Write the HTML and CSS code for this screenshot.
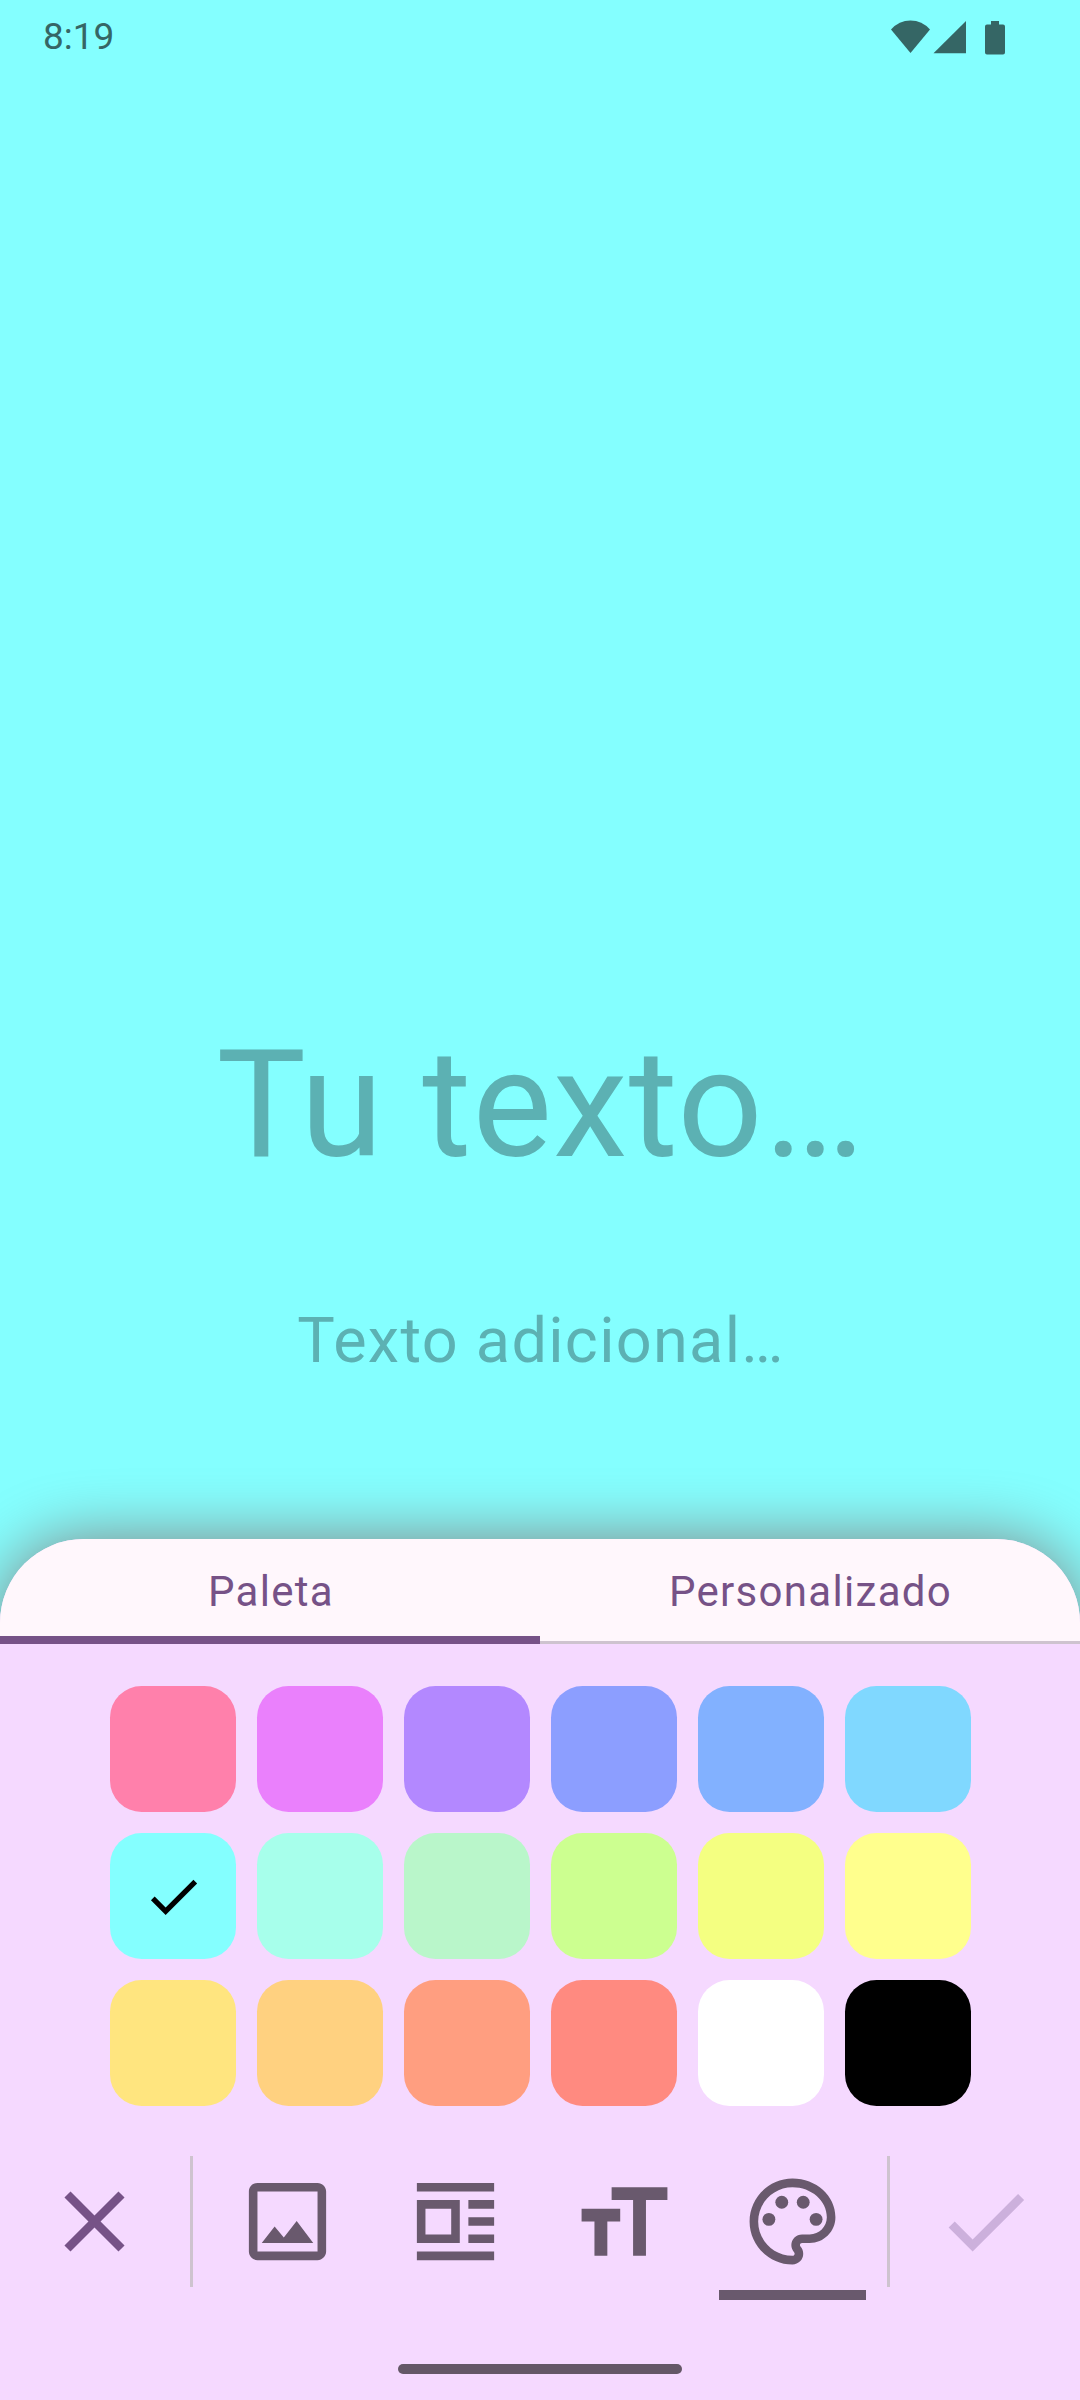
FILE: index.html
```html
<!DOCTYPE html>
<html lang="es">
<head>
<meta charset="utf-8">
<title>Editor</title>
<link rel="stylesheet" href="styles.css">
</head>
<body>
<div class="screen">
  <header class="status">
    <span class="clock">8:19</span>
    <svg class="status-icons" width="116" height="36" viewBox="0 0 116 36" fill="currentColor">
      <path d="M0 10.500Q8 1.500 19.500 1.500T39 10.500L19.500 34Z"/>
      <path d="M42.500 34.300L75 2v32.300Z"/>
      <path d="M100 2h8v3.500h4a2 2 0 0 1 2 2v26a2 2 0 0 1-2 2H96a2 2 0 0 1-2-2v-26a2 2 0 0 1 2-2h4Z"/>
    </svg>
  </header>
  <main class="canvas">
    <div class="title">Tu texto…</div>
    <div class="subtitle">Texto adicional…</div>
  </main>
  <section class="sheet">
    <nav class="tabs">
      <div class="tab active">Paleta</div>
      <div class="tab">Personalizado</div>
    </nav>
    <div class="palette">
      <div class="swatch pink"></div>
      <div class="swatch purple"></div>
      <div class="swatch violet"></div>
      <div class="swatch indigo"></div>
      <div class="swatch blue"></div>
      <div class="swatch sky"></div>
      <div class="swatch cyan"><svg width="63" height="63" viewBox="0 0 24 24"><path d="M9 16.170 4.830 12l-1.420 1.410L9 19 21 7l-1.410-1.410z"/></svg></div>
      <div class="swatch teal"></div>
      <div class="swatch green"></div>
      <div class="swatch lime"></div>
      <div class="swatch chartreuse"></div>
      <div class="swatch yellow"></div>
      <div class="swatch amber"></div>
      <div class="swatch orange"></div>
      <div class="swatch coral"></div>
      <div class="swatch red"></div>
      <div class="swatch white"></div>
      <div class="swatch black"></div>
    </div>
    <div class="toolbar">
      <div class="action close"><svg class="icon" viewBox="0 0 24 24"><path d="M19 6.410 17.590 5 12 10.590 6.410 5 5 6.410 10.590 12 5 17.590 6.410 19 12 13.410 17.590 19 19 17.590 13.410 12z"/></svg></div>
      <div class="tools">
        <div class="tool"><svg class="icon" viewBox="0 0 24 24"><path d="M19 5v14H5V5h14m0-2H5c-1.100 0-2 .9-2 2v14c0 1.100.9 2 2 2h14c1.100 0 2-.9 2-2V5c0-1.100-.9-2-2-2zm-4.860 8.860-3 3.870L9 13.140 6 17h12z"/></svg></div>
        <div class="tool"><svg class="icon" viewBox="0 0 24 24"><path fill-rule="evenodd" d="M3 3h18v2H3zM3 19h18v2H3zM15 7h6v2h-6zM15 11h6v2h-6zM15 15h6v2h-6zM3 7h10v10H3zM5 9v6h6V9z"/></svg></div>
        <div class="tool text-size"><svg class="icon" viewBox="0 0 24 24"><path d="M9 4v3h5v13h3V7h5V4zM2 9v3h3v8h3v-8h3V9z"/></svg></div>
        <div class="tool selected"><svg class="icon" viewBox="0 0 24 24"><path d="M12 22C6.490 22 2 17.510 2 12S6.490 2 12 2s10 4.040 10 9c0 3.310-2.690 6-6 6h-1.770c-.28 0-.5.22-.5.5 0 .12.05.23.13.33.41.47.64 1.060.64 1.670A2.500 2.500 0 0 1 12 22zm0-18c-4.410 0-8 3.590-8 8s3.590 8 8 8c.28 0 .5-.22.5-.5a.54.54 0 0 0-.14-.35c-.41-.46-.63-1.050-.63-1.650a2.500 2.500 0 0 1 2.500-2.500H16c2.210 0 4-1.790 4-4 0-3.860-3.590-7-8-7z"/><circle cx="6.500" cy="11.500" r="1.500"/><circle cx="9.500" cy="7.500" r="1.500"/><circle cx="14.500" cy="7.500" r="1.500"/><circle cx="17.500" cy="11.500" r="1.500"/></svg></div>
      </div>
      <div class="action confirm"><svg class="icon" viewBox="0 0 24 24"><path d="M9 16.170 4.830 12l-1.420 1.410L9 19 21 7l-1.410-1.410z"/></svg></div>
    </div>
    <div class="home"></div>
  </section>
</div>
</body>
</html>
```

FILE: styles.css
```css
* { box-sizing: border-box; }
body { margin: 0; font-family: Roboto, sans-serif; }
svg { display: block; }

.screen {
  width: 1080px;
  height: 2400px;
  display: flex;
  flex-direction: column;
  overflow: hidden;
  background: #84ffff;
}

.status {
  height: 72px;
  padding: 0 73px 0 43px;
  display: flex;
  justify-content: space-between;
  align-items: center;
  color: #356665;
}
.clock { padding-top: 2px; font-size: 37px; line-height: 44px; }
.status-icons { margin-top: 1px; }

.canvas {
  height: 1467px;
  padding-top: 935px;
  text-align: center;
  color: #5cb1b3;
}
.title { padding-left: 2px; font-size: 150px; line-height: 196px; letter-spacing: 1.1px; }
.subtitle { margin-top: 96px; padding-left: 2px; font-size: 63px; line-height: 84px; letter-spacing: 1.3px; }

.sheet {
  height: 861px;
  display: flex;
  flex-direction: column;
  align-items: center;
  border-radius: 84px 84px 0 0;
  background: #f5d9ff;
  box-shadow: 0 0 64px #858282;
}

.tabs {
  width: 100%;
  height: 105px;
  display: flex;
  border-radius: 84px 84px 0 0;
  overflow: hidden;
  background: #fff7fc;
}
.tab {
  width: 540px;
  padding: 28px 0 0 1px;
  border-bottom: 3px solid #cec3cf;
  text-align: center;
  font-size: 42px;
  line-height: 50px;
  letter-spacing: 1.3px;
  color: #765287;
}
.tab.active { padding-left: 2px; border-bottom: 8px solid #765287; }

.palette {
  margin-top: 42px;
  width: 860px;
  display: grid;
  grid-template-columns: repeat(6, 126px);
  grid-auto-rows: 126px;
  gap: 21px;
}
.swatch {
  display: flex;
  align-items: center;
  justify-content: center;
  border-radius: 31.5px;
}
.pink { background: #ff80ab; }
.purple { background: #ea80fc; }
.violet { background: #b388ff; }
.indigo { background: #8c9eff; }
.blue { background: #82b1ff; }
.sky { background: #80d8ff; }
.cyan { background: #84ffff; }
.teal { background: #a7ffeb; }
.green { background: #b9f6ca; }
.lime { background: #ccff90; }
.chartreuse { background: #f4ff81; }
.yellow { background: #ffff8d; }
.amber { background: #ffe57f; }
.orange { background: #ffd180; }
.coral { background: #ff9e80; }
.red { background: #ff8a80; }
.white { background: #fff; }
.black { background: #000; }

.toolbar {
  margin-top: 50px;
  width: 100%;
  height: 144px;
  display: flex;
  color: #69596d;
}
.icon { width: 103px; height: 103px; fill: currentColor; }
.action {
  width: 190px;
  height: 131px;
  display: flex;
  align-items: center;
  justify-content: center;
}
.close { padding-right: 2px; color: #765287; }
.confirm { color: #ccb0dc; }
.tools {
  width: 700px;
  height: 131px;
  display: flex;
  justify-content: center;
  gap: 21px;
  border: solid #cec3cf;
  border-width: 0 3px;
}
.tool {
  width: 147px;
  height: 144px;
  padding: 14px 1px 0 0;
  display: flex;
  justify-content: center;
}
.text-size { padding-right: 0; }
.selected { padding-right: 0; border-bottom: 10px solid #69596d; }

.home {
  margin-top: 64px;
  width: 284px;
  height: 10px;
  border-radius: 5px;
  background: #645767;
}
```
